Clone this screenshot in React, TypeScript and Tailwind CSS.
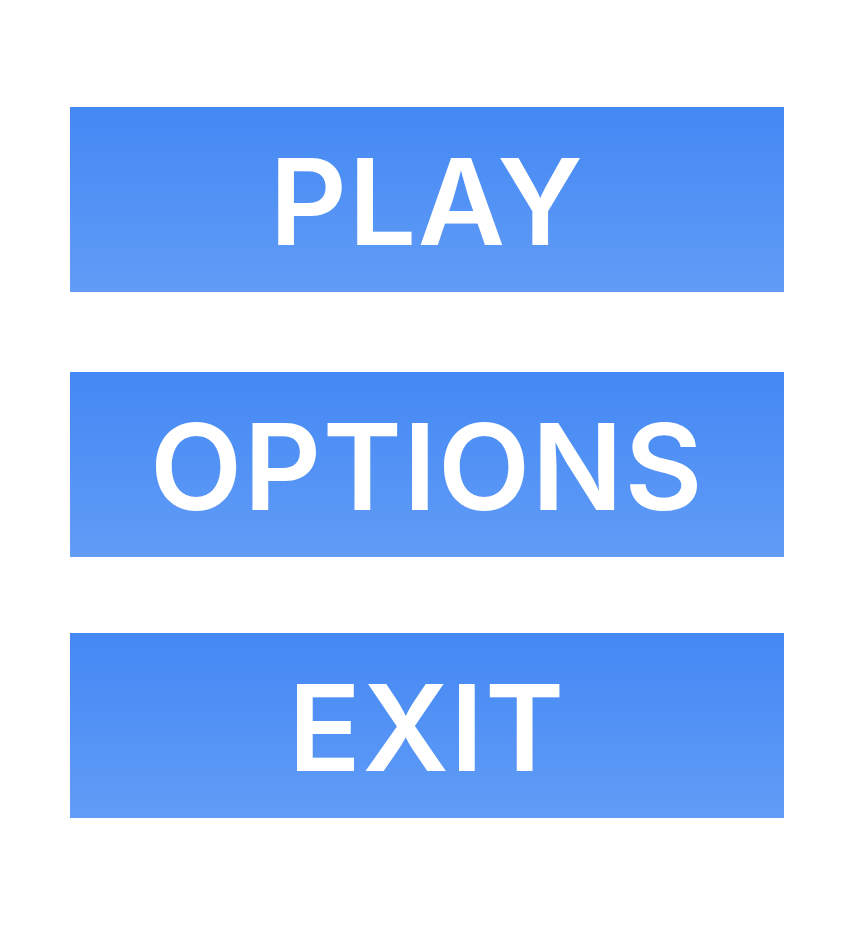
import React from "react";

const items = ["PLAY", "OPTIONS", "EXIT"];

const MenuButton: React.FC<{ label: string; className?: string }> = ({ label, className }) => (
    <button
        className={`flex h-[185px] w-full items-center justify-center bg-gradient-to-b from-[#4488f4] to-[#619cf6] text-white ${className ?? ""}`}
    >
        <span className="pt-[4px] text-[120px] font-semibold leading-none tracking-[1.5px] [font-family:Inter,sans-serif]">
            {label}
        </span>
    </button>
);

export default function App() {
    return (
        <div className="min-h-[937px] w-[868px] bg-white">
            <div className="ml-[70px] flex w-[714px] flex-col pt-[107px]">
                <MenuButton label={items[0]} />
                <MenuButton label={items[1]} className="mt-[80px] h-[184px]" />
                <MenuButton label={items[2]} className="mt-[76px]" />
            </div>
        </div>
    );
}
